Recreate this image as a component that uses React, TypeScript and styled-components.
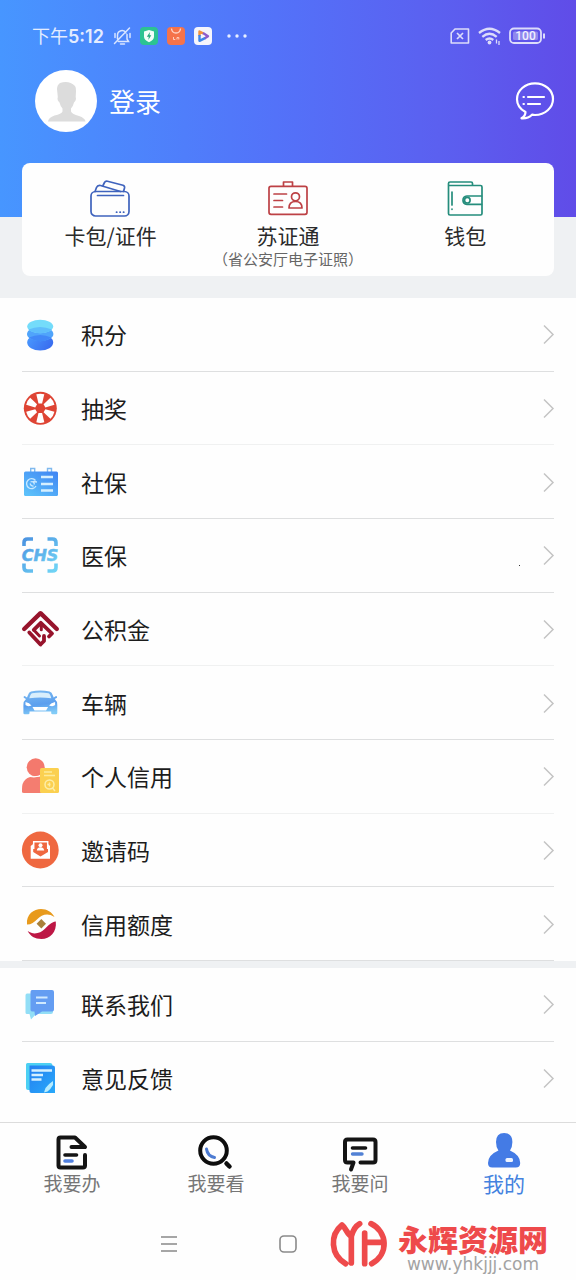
import React from "react";
import styled, { createGlobalStyle } from "styled-components";

const GlobalStyle = createGlobalStyle`
  *, *::before, *::after { box-sizing: border-box; }
  body {
    margin: 0;
    background: #fefefe;
    color: #1c1c1c;
    font-family: "Noto Sans CJK SC", "Noto Sans", sans-serif;
  }
  button { font: inherit; color: inherit; background: none; border: 0; padding: 0; cursor: pointer; }
  a { color: inherit; text-decoration: none; }
  ul { list-style: none; margin: 0; padding: 0; }
  svg { display: block; flex: none; overflow: visible; }
`;

const Page = styled.div`
  display: flex;
  flex-direction: column;
  min-height: 100vh;
`;

const Header = styled.header`
  padding: 22px 22px;
  background: linear-gradient(90deg, #4796ff, #5372f9 48%, #5b60f0 76%, #604ce8) no-repeat 0 0 / 100% 217px, #eff1f3;
`;

const StatusBar = styled.div`
  display: flex;
  align-items: center;
  justify-content: space-between;
  height: 28px;
  padding: 0 8px 0 10px;
  color: #e4ecff;
`;

const StatusGroup = styled.div<{ $gap: number }>`
  display: flex;
  align-items: center;
  gap: ${(p) => p.$gap}px;
`;

const Time = styled.span`
  font-size: 18px;
  line-height: 28px;
  b { font-family: Inter, sans-serif; font-weight: 600; }
`;

const Profile = styled.div`
  display: flex;
  align-items: center;
  justify-content: space-between;
  margin: 20px 0 31px;
  padding-left: 13px;
`;

const Login = styled.button`
  display: flex;
  align-items: center;
  gap: 12px;
  color: #fff;
  font-size: 26px;
  line-height: 36px;
`;

const Card = styled.section`
  display: grid;
  grid-template-columns: repeat(3, 1fr);
  padding: 15px 0 6px;
  border-radius: 8px;
  background: #fefefe;
`;

const CardItem = styled.button`
  display: flex;
  flex-direction: column;
  align-items: center;
`;

const CardLabel = styled.span`
  margin-top: 4px;
  font-size: 21px;
  line-height: 26px;
  color: #2a2a2a;
`;

const CardNote = styled.span`
  font-size: 15px;
  line-height: 22px;
  white-space: nowrap;
  color: #666;
`;

const Group = styled.ul<{ $height: number }>`
  display: grid;
  grid-auto-rows: 1fr;
  min-height: ${(p) => p.$height}px;
  padding: 0 22px;
`;

const lineColors = { normal: "#dedfe0", faint: "#f0f1f1", none: "transparent" };

const Row = styled.li<{ $line: keyof typeof lineColors }>`
  position: relative;
  display: flex;
  border-bottom: 1px solid ${(p) => lineColors[p.$line]};
`;

const RowLink = styled.a`
  display: flex;
  flex: 1;
  align-items: center;
`;

const RowLabel = styled.span`
  flex: 1;
  margin-left: 23px;
  font-size: 23px;
  line-height: 32px;
`;

const Dot = styled.i`
  position: absolute;
  right: 34px;
  bottom: 26px;
  width: 1px;
  height: 1px;
  background: #333;
`;

const Gap = styled.div`
  height: 7px;
  background: #eff1f3;
`;

const TabBar = styled.nav`
  display: grid;
  grid-template-columns: repeat(4, 1fr);
  margin-top: 7px;
  padding: 10px 0 14px;
  border-top: 1px solid #dcdcdc;
`;

const Tab = styled.a<{ $active?: boolean }>`
  display: flex;
  flex-direction: column;
  align-items: center;
  font-size: ${(p) => (p.$active ? 21 : 19)}px;
  line-height: 24px;
  color: ${(p) => (p.$active ? "#4482df" : "#767676")};
`;

const SystemBar = styled.div`
  position: relative;
  display: grid;
  grid-template-columns: repeat(3, 119px);
  align-items: center;
  justify-content: center;
  justify-items: center;
  height: 70px;
`;

const Watermark = styled.div`
  position: absolute;
  right: 28px;
  top: 2px;
  display: flex;
  gap: 7px;
`;

const WatermarkText = styled.div`
  display: flex;
  flex-direction: column;
  padding-top: 10px;
`;

const SiteName = styled.strong`
  font-size: 30px;
  font-weight: 900;
  line-height: 34px;
  color: #ee4a4b;
`;

const SiteUrl = styled.span`
  font-family: "DejaVu Sans", sans-serif;
  font-size: 17px;
  line-height: 18px;
  text-align: center;
  color: #a3a3a3;
`;

const Small = ({ children, w = 18, h = 18 }: { children: React.ReactNode; w?: number; h?: number }) => (
  <svg width={w} height={h} viewBox={`0 0 ${w} ${h}`} fill="none" aria-hidden="true">{children}</svg>
);

const Icon = ({ children, size = 36 }: { children: React.ReactNode; size?: number }) => (
  <svg width={size} height={size} viewBox={`0 0 ${size} ${size}`} fill="none" aria-hidden="true">{children}</svg>
);

const Chevron = () => (
  <svg width="11" height="20" viewBox="0 0 11 20" fill="none" stroke="#c4c4c4" strokeWidth="1.500" aria-hidden="true">
    <path d="M1 1.500l9 9-9 9" />
  </svg>
);

const Points = () => (
  <Icon>
    <defs>
      <linearGradient id="disc" x1="0" y1="0" x2="1" y2="0.4">
        <stop stopColor="#4a9bff" /><stop offset="1" stopColor="#3a6ff0" />
      </linearGradient>
    </defs>
    <ellipse cx="18.2" cy="26.5" rx="13" ry="8" fill="url(#disc)" />
    <ellipse cx="18.2" cy="18" rx="13.2" ry="7.2" fill="#50a4fb" />
    <ellipse cx="18.2" cy="10.5" rx="13" ry="6.8" fill="#74dcfa" />
    <path d="M6.500 13.500q11.700-5 23.400 0q-4.500 3.800-11.700 3.800t-11.700-3.800z" fill="#5fbefb" />
    <path d="M7 21.500q11.200-5 22.400 0q-5 3.700-11.200 3.700t-11.200-3.700z" fill="#4188f8" />
  </Icon>
);

const Lottery = () => (
  <Icon>
    <circle cx="18.300" cy="18.300" r="16.500" fill="#de4434" />
    {[0, 60, 120, 180, 240, 300].map((a) => (
      <path key={a} d="M14.300 4.300q4-1.300 8 0l-2.200 9.200h-3.600z" fill="#fff" transform={`rotate(${a} 18.3 18.3)`} />
    ))}
    <circle cx="18.300" cy="18.300" r="4" fill="#de4434" />
  </Icon>
);

const Social = () => (
  <Icon>
    <defs>
      <linearGradient id="soc" x1="1" y1="0" x2="0.2" y2="1">
        <stop stopColor="#3f83f3" /><stop offset="1" stopColor="#5cc0fa" />
      </linearGradient>
    </defs>
    <path d="M8.700 8V4.500h4V8M25.500 8V4.500h4V8" stroke="#7fb9ee" strokeWidth="1.400" />
    <rect x="2" y="7.500" width="34" height="24.500" rx="1.500" fill="url(#soc)" />
    <path d="M19 13h12M19 20h12M19 26.500h12" stroke="#d5efff" strokeWidth="2.500" />
    <path d="M13.500 16.500a5 5 0 1 0 .5 5.500M8.500 18q3-1.500 4 2.500M8 19.500q1 3 3.500 2.500M11 17.500l4 .5" stroke="#c9e9ff" strokeWidth="1.300" />
  </Icon>
);

const Medical = () => (
  <Icon>
    <defs>
      <linearGradient id="med" gradientUnits="userSpaceOnUse" x1="0" y1="0" x2="30" y2="36">
        <stop stopColor="#4a90e0" /><stop offset="1" stopColor="#6fd3f5" />
      </linearGradient>
    </defs>
    <path d="M2 9V5.500q0-3.500 3.500-3.500H11M25.500 2h5q3.500 0 3.500 3.500V9M34 26.500v4q0 3.500-3.500 3.500h-5M11 34H5.500Q2 34 2 30.500v-4" stroke="url(#med)" strokeWidth="3.600" />
    <text x="18" y="24" textAnchor="middle" fontFamily="DejaVu Sans, sans-serif" fontSize="16" fontWeight="700" fontStyle="italic" fill="url(#med)" stroke="url(#med)" strokeWidth="0.500">CHS</text>
  </Icon>
);

const Fund = () => (
  <Icon>
    <g stroke="#97142c" strokeWidth="4.400" strokeLinecap="round" strokeLinejoin="round">
      <path d="M2.200 18L18.500 2.200 34.800 18" />
      <g strokeWidth="3.800">
        <path d="M7.300 21.500L18.500 33.500 22 30V25" />
        <path d="M11.800 18.800L18.800 11.800 30 22.500 27 25.500" />
        <path d="M12.500 19.800L17.500 25M19.300 14V18.800" strokeWidth="3" />
      </g>
    </g>
  </Icon>
);

const Car = () => (
  <Icon>
    <defs>
      <linearGradient id="car" x1="0.3" y1="0" x2="0.5" y2="1">
        <stop stopColor="#79b9f1" /><stop offset="0.6" stopColor="#5c9fee" /><stop offset="1" stopColor="#82ccf7" />
      </linearGradient>
    </defs>
    <path d="M9 6.500q9.300-2 18.600 0 2.300.5 3.300 4l.8 2 2.300-1.500q1.500.2 1 1.800l-2.300 1.300q2.600 2 2.600 6v8q0 1.200-1.300 1.200h-3.500q-1.300 0-1.300-1.300v-1.500H7.500V28q0 1.300-1.300 1.300H2.700q-1.300 0-1.300-1.200v-8q0-4 2.600-6L1.700 12.800q-.5-1.600 1-1.800L5 12.500l.8-2q1-3.500 3.200-4z" fill="url(#car)" />
    <path d="M10 8.200q8.300-1.600 16.600 0 1.500.4 2.700 5-11-1.500-22 0 1.200-4.600 2.700-5z" fill="#d9effc" />
    <path d="M3.500 17q4 .5 6 3.500-4 1.500-6-.5zM33.100 17q-4 .5-6 3.500 4 1.500 6-.5zM10.500 22h15.600l-2 3.500H12.500z" fill="#fff" />
  </Icon>
);

const Credit = () => (
  <Icon>
    <circle cx="13.700" cy="9.300" r="9" fill="#f4796d" />
    <path d="M0 34v-3q0-12.500 13-12.500h8V35H2q-2 0-2-1z" fill="#f47d70" />
    <path d="M5 17.500q8 3 16-1" stroke="#fff" strokeWidth="1.200" />
    <rect x="18" y="10" width="19" height="25" rx="1.500" fill="#fbd050" />
    <path d="M22 14h8M22 17.500h11" stroke="#fdeb9a" strokeWidth="1.500" />
    <circle cx="27.500" cy="26.500" r="4.500" stroke="#fdeea8" strokeWidth="1.500" />
    <path d="M30.500 30l2.500 3M25.500 26.500h3M27.500 24.500v4" stroke="#fdeea8" strokeWidth="1.400" />
  </Icon>
);

const Invite = () => (
  <Icon>
    <circle cx="18.300" cy="18" r="18.400" fill="#ef6840" />
    <path d="M8.700 14l2.500-2v8l7.300 4.500 7.500-4.500v-8l2 2v12.800H8.700z" fill="#fff" />
    <path d="M11.700 17V9.800h14V17" stroke="#fff" strokeWidth="1.500" />
    <circle cx="18.500" cy="13.300" r="2" fill="#fff" />
    <path d="M14.800 18.500q.5-3.300 3.700-3.300t3.700 3.300z" fill="#fff" />
  </Icon>
);

const Quota = () => (
  <Icon>
    <path d="M5 18.500C4 8 12 3 19 3c6 0 11 3 13.500 8-7-5-13-2-17 2-3.500 3.500-6 5.500-10.500 5.500z" fill="#e89a1c" />
    <path d="M33.800 15.500C35 26 28 33 19.500 33 13 33 8 30 5.700 25c6 4.500 13 2 17-2 3.500-3.500 6.500-7 11.100-7.500z" fill="#bd1745" />
    <path d="M19.300 13l4.700 4.700-4.700 4.700-4.700-4.700z" fill="#a9803a" />
  </Icon>
);

const Contact = () => (
  <Icon>
    <path d="M5 7.500h24q2 0 2 2V26q0 2-2 2H14l-5 5.500L7.500 28H5q-1.500 0-1.500-1.500v-17q0-2 1.500-2z" fill="#92def6" />
    <path d="M10 4h20q2 0 2 2v17.500q0 2-2 2H20l-7 4.500-.5-4.500H10q-1.500 0-1.500-2V6q0-2 1.500-2z" fill="#649df2" />
    <path d="M14 11.500h11.500M14 17h10" stroke="#cfe9ff" strokeWidth="2" />
  </Icon>
);

const Feedback = () => (
  <Icon>
    <defs>
      <linearGradient id="fb" x1="0" y1="0" x2="1" y2="1">
        <stop stopColor="#257ff0" /><stop offset="1" stopColor="#28a9fa" />
      </linearGradient>
    </defs>
    <path d="M4 4.500q0-1.500 1.500-1.500H28q2.500 0 2.500 3v24H6q-2 0-2-2z" fill="#4cd0f3" />
    <path d="M7.500 5.500h23q2.500 0 2.500 2V33H9.500q-2 0-2-2z" fill="url(#fb)" />
    <path d="M9.500 10.500H30M9.500 15h11.500M9.500 19.500h10" stroke="#d4efff" strokeWidth="2.300" />
    <path d="M22 32.500l1.500-4.500q3.500-4.500 7.500-7v4q-2.500 4.500-5.500 6.500z" fill="#b5ecff" />
  </Icon>
);

const BellOff = () => (
  <Small>
    <path d="M4.500 12V8a4.500 4.500 0 0 1 8.500-2M14 7.500V12l1.500 2.500H5.500M7.500 17h4M1.500 16.500L16.500 1M2 6.500v4M17 6.500v4" stroke="#d9e5ff" strokeWidth="1.500" strokeLinecap="round" />
  </Small>
);

const ShieldApp = () => (
  <Small>
    <rect width="18" height="18" rx="4" fill="#2cc392" />
    <path d="M9 3l5 1.500v5Q14 13 9 15.200 4 13 4 9.500v-5z" fill="#f2fff9" />
    <path d="M10 5L6.800 9.700h2L8.300 13l3-4.700H9.500z" fill="#24a67b" />
  </Small>
);

const StoreApp = () => (
  <Small>
    <rect width="18" height="18" rx="4" fill="#f5734a" />
    <path d="M4.500 1.500q.5 4.500 4.500 4.500t4.500-4.500" stroke="#ffd6c8" strokeWidth="1.300" />
    <path d="M6.500 10v2.500h1.800M10 12.500v-2h1.800v2" stroke="#ffd0c0" />
  </Small>
);

const VideoApp = () => (
  <Small>
    <rect width="18" height="18" rx="4" fill="#f5f5fc" />
    <path d="M5.500 9V4.500l4 2" stroke="#f2913b" strokeWidth="2.400" strokeLinejoin="round" />
    <path d="M9 6l5 3.200-3.500 2.200" stroke="#8f5cc9" strokeWidth="2.400" strokeLinejoin="round" />
    <path d="M11 11.200l-5.500 2.600V8" stroke="#3d86e8" strokeWidth="2.400" strokeLinejoin="round" />
  </Small>
);

const Avatar = () => (
  <svg width="62" height="62" viewBox="0 0 62 62" aria-hidden="true">
    <circle cx="31" cy="31" r="31" fill="#fff" />
    <path d="M25 13q9-3 15 3 1 1 1 5l-.3 6q1 3-1.700 5.500-1 4-3 6v3q1 2.500 8 4.500 6 2 6.500 5.500H13q.5-4 6.500-6 7-1.500 8-4v-3q-2-2-3-6-2.700-2.500-1.700-5.500L22 19q0-4 3-6z" fill="#dcdcdc" />
  </svg>
);

type Entry = { label: string; icon: React.ReactNode; line?: keyof typeof lineColors; dot?: boolean };

const services: Entry[] = [
  { label: "积分", icon: <Points /> },
  { label: "抽奖", icon: <Lottery />, line: "faint" },
  { label: "社保", icon: <Social /> },
  { label: "医保", icon: <Medical />, dot: true },
  { label: "公积金", icon: <Fund />, line: "faint" },
  { label: "车辆", icon: <Car /> },
  { label: "个人信用", icon: <Credit />, line: "faint" },
  { label: "邀请码", icon: <Invite /> },
  { label: "信用额度", icon: <Quota /> },
];

const support: Entry[] = [
  { label: "联系我们", icon: <Contact /> },
  { label: "意见反馈", icon: <Feedback />, line: "none" },
];

const MenuRow = ({ entry }: { entry: Entry }) => (
  <Row $line={entry.line ?? "normal"}>
    <RowLink href="#">
      {entry.icon}
      <RowLabel>{entry.label}</RowLabel>
      <Chevron />
    </RowLink>
    {entry.dot && <Dot />}
  </Row>
);

export default function App() {
  return (
    <Page>
      <GlobalStyle />
      <Header>
        <StatusBar>
          <StatusGroup $gap={9}>
            <Time>下午<b>5:12</b></Time>
            <BellOff />
            <ShieldApp />
            <StoreApp />
            <VideoApp />
            <Small w={34}>
              <g fill="#e8efff"><circle cx="8" cy="9" r="1.700" /><circle cx="16" cy="9" r="1.700" /><circle cx="24" cy="9" r="1.700" /></g>
            </Small>
          </StatusGroup>
          <StatusGroup $gap={8}>
            <Small w={20}>
              <path d="M5 2h13.500v14H1.200V6z" stroke="#dcdcfa" strokeWidth="1.600" strokeLinejoin="round" />
              <path d="M7 6l6 6M13 6l-6 6" stroke="#dcdcfa" strokeWidth="1.700" />
            </Small>
            <Small w={23}>
              <g stroke="#dcdcfa" strokeWidth="2.300">
                <path d="M1 6q10.500-8.500 21 0M4.300 9.800q7.200-6 14.400 0M7.700 13q3.800-3 7.600 0" />
              </g>
              <circle cx="11.500" cy="15.500" r="1.900" fill="#dcdcfa" />
              <path d="M18.500 12.500v4M21 14v4" stroke="#dcdcfa" strokeWidth="1.300" />
            </Small>
            <Small w={37}>
              <rect x="1" y="1.500" width="31" height="14.500" rx="4" stroke="#dcdcfa" strokeWidth="1.800" />
              <rect x="4" y="4.500" width="25" height="8.500" rx="1.500" fill="#8f88ee" />
              <path d="M35 6.500v5" stroke="#dcdcfa" strokeWidth="2" />
              <text x="16.500" y="13" textAnchor="middle" fontFamily="Roboto, sans-serif" fontSize="12" fontWeight="500" fill="#f1f0ff">100</text>
            </Small>
          </StatusGroup>
        </StatusBar>
        <Profile>
          <Login><Avatar />登录</Login>
          <button aria-label="消息">
            <svg width="38" height="38" viewBox="0 0 38 38" fill="none" stroke="#fff" strokeWidth="2.200" strokeLinecap="round" strokeLinejoin="round" aria-hidden="true">
              <path d="M9.500 30C4 27 1 22.500 1 17.200 1 8.500 9 1.300 19 1.300s18 7 18 15.700-8 16-18 16q-1.500 0-3-.3Q12 36.800 5.500 36.300q4-2.300 4-6.300z" />
              <path d="M12 15h16M12 22h12M7.500 15h.4M7.500 22h.4" />
            </svg>
          </button>
        </Profile>
        <Card>
          <CardItem>
            <Icon size={40}>
              <g stroke="#3f63bd" strokeWidth="1.700" strokeLinejoin="round" strokeLinecap="round">
                <rect x="0" y="13.500" width="38" height="24.500" rx="4.500" />
                <path d="M6.500 17.500h26M4 13.500l1.500-4q1-2.500 4-2l20 6" />
                <path d="M12 7.500l1.500-3q1-1.700 3-1.200l15.500 4q2 .7 1.500 2.700l-1 3.500" />
                <path d="M25.500 34.200h.3M29 34.200h.3M32.500 34.200h.3" />
              </g>
            </Icon>
            <CardLabel>卡包/证件</CardLabel>
          </CardItem>
          <CardItem>
            <Icon size={40}>
              <g stroke="#bd4145" strokeWidth="1.700" strokeLinejoin="round" strokeLinecap="round">
                <rect x="1" y="8.300" width="38" height="28" rx="2" />
                <path d="M15.500 8V4h9v4M6 16h12.500M6 22.500h8.500M6 29h8.500" />
                <circle cx="27.500" cy="18.800" r="4" />
                <path d="M21 30q0-6.500 6.500-6.500T34 30z" />
              </g>
            </Icon>
            <CardLabel>苏证通</CardLabel>
            <CardNote>（省公安厅电子证照）</CardNote>
          </CardItem>
          <CardItem>
            <Icon size={40}>
              <g stroke="#258d7c" strokeWidth="1.700" strokeLinejoin="round" strokeLinecap="round">
                <path d="M3.500 7.500h32q1.500 0 1.500 1.500v26.500q0 1.500-1.500 1.500H5q-1.500 0-1.500-1.500v-30q0-1.500 1.500-1.500h21q1.500 0 1.500 1.500v2" />
                <path d="M7 14v13M7 31v.3M36.500 18H22q-4 .5-4 4.200t4 4.200h14.500" />
                <circle cx="22.300" cy="22.200" r="2.800" />
              </g>
            </Icon>
            <CardLabel>钱包</CardLabel>
          </CardItem>
        </Card>
      </Header>

      <Group $height={663}>
        {services.map((s) => <MenuRow key={s.label} entry={s} />)}
      </Group>
      <Gap />
      <Group $height={147}>
        {support.map((s) => <MenuRow key={s.label} entry={s} />)}
      </Group>

      <TabBar>
        <Tab href="#">
          <Icon size={38}>
            <g stroke="#141414" strokeWidth="4" strokeLinecap="round" strokeLinejoin="round">
              <path d="M32 22v10.500q0 2-2 2H7.500q-2 0-2-2V6.500q0-2 2-2H22L32 14H18.500" />
              <path d="M12 22h11.500" strokeWidth="3.600" />
              <path d="M12 28h7" stroke="#5281e0" strokeWidth="3.600" />
            </g>
          </Icon>
          我要办
        </Tab>
        <Tab href="#">
          <Icon size={38}>
            <g strokeWidth="4" strokeLinecap="round">
              <circle cx="16.500" cy="17.500" r="13.300" stroke="#0d0d0d" />
              <path d="M29.500 30.500l3 3" stroke="#0d0d0d" strokeWidth="4.500" />
              <path d="M9.500 16q1 7 8 8.500" stroke="#4d7bd2" strokeWidth="3" />
            </g>
          </Icon>
          我要看
        </Tab>
        <Tab href="#">
          <Icon size={38}>
            <g stroke="#141414" strokeWidth="4" strokeLinecap="round" strokeLinejoin="round">
              <path d="M19.500 29.500H32q2.500 0 2.500-2.500V9q0-2.500-2.500-2.500H6.500Q4 6.500 4 9v18q0 2.500 2.500 2.500h6l-2.500 7" />
              <path d="M11.500 15h13" strokeWidth="3.600" />
              <path d="M11.500 21h9.500" stroke="#5281d5" strokeWidth="3.400" />
            </g>
          </Icon>
          我要问
        </Tab>
        <Tab href="#" $active>
          <Icon size={38}>
            <path d="M11 9q0-9 8.200-9t8.200 9q0 5-2.400 8.500 10.200 4.500 10.200 12.500 0 4.500-4.500 4.500H7.300Q3 34.500 3 30q0-8 10.400-12.500Q11 14 11 9z" fill="#447be5" />
            <rect x="20.500" y="25" width="7.500" height="4" rx="1.500" fill="#eef4ff" />
          </Icon>
          我的
        </Tab>
      </TabBar>

      <SystemBar>
        <button aria-label="菜单">
          <svg width="16" height="16" viewBox="0 0 16 16" stroke="#898989" strokeWidth="1.300" aria-hidden="true">
            <path d="M0 1h16M0 8h16M0 15h16" />
          </svg>
        </button>
        <button aria-label="主页">
          <svg width="18" height="18" viewBox="0 0 18 18" fill="none" stroke="#8a8a8a" strokeWidth="1.600" aria-hidden="true">
            <rect x="1" y="1" width="16" height="16" rx="4" />
          </svg>
        </button>
        <Watermark>
          <svg width="64" height="64" viewBox="0 0 192 192" fill="none" stroke="#ee4a4b" strokeWidth="17" strokeLinecap="round" strokeLinejoin="round" aria-hidden="true">
            <path d="M56 158C10 132 8 72 45 42 58 52 60 70 73 76Q80 48 98 38M73 76V156" />
            <path d="M113 66V158M113 94H168M132 38C182 62 186 130 134 158" />
          </svg>
          <WatermarkText>
            <SiteName>永辉资源网</SiteName>
            <SiteUrl>www.yhkjjj.com</SiteUrl>
          </WatermarkText>
        </Watermark>
      </SystemBar>
    </Page>
  );
}
